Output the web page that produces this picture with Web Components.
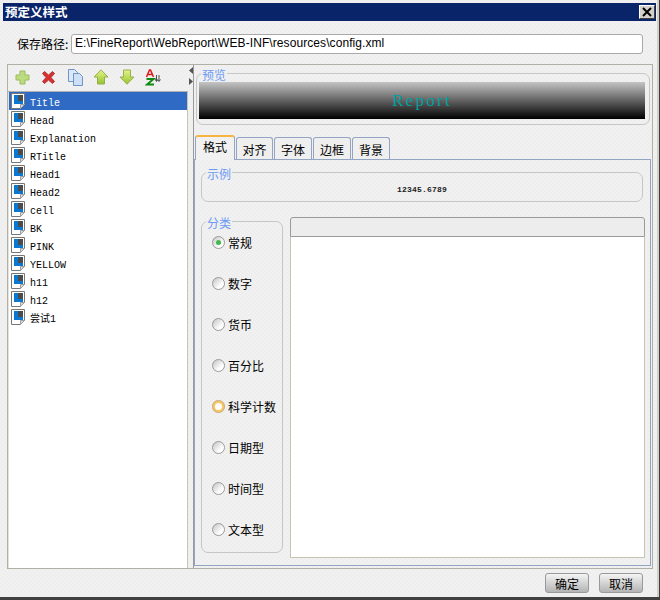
<!DOCTYPE html>
<html lang="zh">
<head>
<meta charset="utf-8">
<title>预定义样式</title>
<style>
  html, body { margin: 0; padding: 0; background: #f0f0f0; }
  body { font-family: "Noto Sans CJK SC", "Liberation Sans", sans-serif; font-size: 12px; color: #000; }
</style>
</head>
<body>
<style-dialog heading="预定义样式">
  <path-row slot="path" label="保存路径:" value="E:\FineReport\WebReport\WEB-INF\resources\config.xml"></path-row>
  <style-list slot="left"></style-list>
  <group-box slot="preview" label="预览" class="preview"><preview-strip text="Report"></preview-strip></group-box>
  <format-tabs slot="tabs"></format-tabs>
</style-dialog>

<script>
'use strict';

(function() {
  const PAPER = 'repeating-conic-gradient(#eeeeee 0 25%, #f1f1f1 0 50%) 0 0 / 4px 4px';

  // bar with the title and the close box, body comes from slots
  class StyleDialog extends HTMLElement {
    constructor() {
      super();
      const shadow = this.attachShadow({ mode: 'open' });
      shadow.innerHTML = `
        <style>
          :host { display: flex; flex-direction: column; box-sizing: border-box; width: 660px; height: 600px;
            background: ${PAPER}; border-right: 1px solid #404040; border-bottom: 3px solid #404040;
            box-shadow: inset -2px 0 0 #d4d0c8; }
          .title { display: flex; align-items: center; justify-content: space-between; height: 18px;
            margin: 3px 3px 0 3px; padding: 0 1px 0 2px; background: #0a246a; color: #fff;
            font-weight: 700; font-size: 12.500px; line-height: 18px; }
          .close { box-sizing: border-box; width: 16px; height: 14px; background: #d4d0c8; display: flex;
            align-items: center; justify-content: center;
            border: 1px solid; border-color: #fff #404040 #404040 #fff; }
          .main { display: flex; box-sizing: border-box; height: 505px; margin: 0 6px 0 7px;
            border: 1px solid #b0b0a4; }
          .left { width: 180px; flex: none; }
          .split { width: 5px; flex: none; display: flex; flex-direction: column; align-items: center;
            gap: 4px; padding-top: 2px; box-sizing: border-box; }
          .right { flex: 1; min-width: 0; display: flex; flex-direction: column; border-left: 1px solid #9a9a9a; }
          .foot { flex: 1; display: flex; justify-content: flex-end; align-items: flex-start; gap: 10px;
            padding: 4px 16px 0 0; }
        </style>
        <div class="title"><span></span>
          <span class="close"><svg width="10" height="10" viewBox="0 0 10 10"><path d="M1 1l8 8M9 1l-8 8" stroke="#000" stroke-width="2"/></svg></span>
        </div>
        <slot name="path"></slot>
        <div class="main">
          <div class="left"><slot name="left"></slot></div>
          <div class="split">
            <svg width="4" height="7" viewBox="0 0 4 7"><path d="M4 0v7L0 3.500z" fill="#555"/></svg>
            <svg width="4" height="7" viewBox="0 0 4 7"><path d="M0 0v7l4-3.500z" fill="#555"/></svg>
          </div>
          <div class="right"><slot name="preview"></slot><slot name="tabs"></slot></div>
        </div>
        <div class="foot"><dialog-button>确定</dialog-button><dialog-button>取消</dialog-button></div>
      `;
      shadow.querySelector('.title span').textContent = this.getAttribute('heading');
    }
  }

  class PathRow extends HTMLElement {
    constructor() {
      super();
      const shadow = this.attachShadow({ mode: 'open' });
      shadow.innerHTML = `
        <style>
          :host { display: flex; align-items: flex-start; box-sizing: border-box; height: 43px; padding: 13px 16px 0 17px; gap: 1px; }
          .field { flex: 1; box-sizing: border-box; height: 20px; background: #fff;
            border: 1px solid #a9a9a9; border-radius: 3px; padding-left: 3px; letter-spacing: .08px;
            font: 12px/17px "Liberation Sans", sans-serif; white-space: nowrap; overflow: hidden; }
          label { width: 53px; flex: none; white-space: nowrap; line-height: 20px; }
        </style>
        <label></label><div class="field"></div>
      `;
      shadow.querySelector('label').textContent = this.getAttribute('label');
      shadow.querySelector('.field').textContent = this.getAttribute('value');
    }
  }

  const DOC_ICON = `<svg width="17" height="18" viewBox="0 0 17 18">
    <path d="M1.500 1.500h13v11l-4 4h-9z" fill="#fff" stroke="#777"/>
    <path d="M10.500 16.500v-4h4z" fill="#d8d8d8" stroke="#a0a0a0"/>
    <rect x="4" y="3" width="9" height="9" fill="#0a78d0"/>
    <rect x="8" y="3" width="5" height="6" fill="#4c4c4c"/>
  </svg>`;

  const TOOL_ICONS = [
    // add
    `<svg width="15" height="15" viewBox="0 0 15 15"><path d="M5 1h5v4h4v5h-4v4H5v-4H1V5h4z" fill="#bcdc80" stroke="#9dbb5e"/></svg>`,
    // delete
    `<svg width="15" height="15" viewBox="0 0 15 15"><path d="M3.500 1.500l4 3.500 4-3.500 2 2-3.500 4 3.500 4-2 2-4-3.500-4 3.500-2-2 3.500-4-3.500-4z" fill="#dd2e2e" stroke="#a83c3c"/></svg>`,
    // copy
    `<svg width="17" height="17" viewBox="0 0 17 17"><path d="M1.500.5h6l3 3v9h-9z" fill="#dce8f8" stroke="#6f94c8"/><path d="M6.500 4.500h6l3 3v9h-9z" fill="#cfe0f6" stroke="#6f94c8"/></svg>`,
    // up
    `<svg width="16" height="16" viewBox="0 0 16 16"><defs><linearGradient id="u" x1="0" y1="0" x2="0" y2="1"><stop offset="0" stop-color="#e6f48a"/><stop offset="1" stop-color="#94c430"/></linearGradient></defs><path d="M8 .8l7 7.200h-3.500v7h-7V8H1z" fill="url(#u)" stroke="#98ae4a"/></svg>`,
    // down
    `<svg width="16" height="16" viewBox="0 0 16 16"><defs><linearGradient id="d" x1="0" y1="0" x2="0" y2="1"><stop offset="0" stop-color="#e6f48a"/><stop offset="1" stop-color="#94c430"/></linearGradient></defs><path d="M8 15.200L1 8h3.500V1h7v7H15z" fill="url(#d)" stroke="#98ae4a"/></svg>`,
    // sort a-z
    `<svg width="16" height="17" viewBox="0 0 16 17"><path d="M1.500 8L4.500 1h1l3 7M3 5.500h4" fill="none" stroke="#e01818" stroke-width="1.500"/><path d="M1.500 10h7L2 15.500h7" fill="none" stroke="#108a10" stroke-width="2"/><path d="M11.500 6v6M14 6v6M10 10l1.500 2.500L13 10.500M12.500 10.500l1.500 2 1.500-2" fill="none" stroke="#505050"/></svg>`
  ];

  // toolbar and the list of style names
  class StyleList extends HTMLElement {
    constructor() {
      super();
      const shadow = this.attachShadow({ mode: 'open' });
      const names = ['Title', 'Head', 'Explanation', 'RTitle', 'Head1', 'Head2', 'cell', 'BK', 'PINK', 'YELLOW', 'h11', 'h12', '尝试1'];
      const rows = names.map((name, i) => `<div class="row${i === 0 ? ' on' : ''}">${DOC_ICON}<span>${name}</span></div>`).join('');
      const tools = TOOL_ICONS.map(svg => `<span class="tool">${svg}</span>`).join('');
      shadow.innerHTML = `
        <style>
          :host { display: flex; flex-direction: column; height: 503px; }
          .bar { display: flex; align-items: center; box-sizing: border-box; height: 27px; padding: 0 0 2px 7px;
            border-bottom: 1px solid #b0b0b0; }
          .tool { width: 26px; display: flex; justify-content: flex-start; }
          .list { flex: 1; background: #fff; border-left: 1px solid #e4e2da; border-right: 1px solid #c8c4b4; }
          .row { display: flex; align-items: center; gap: 3px; height: 18px; padding-left: 1px;
            font: 10px/18px "Liberation Mono", "Noto Sans CJK SC", monospace; }
          .row span { padding-top: 6px; }
          .row.on { background: #2f6bc4; color: #fff; }
          .row svg { flex: none; }
        </style>
        <div class="bar">${tools}</div>
        <div class="list">${rows}</div>
      `;
    }
  }

  // rounded frame with a blue caption in the border
  class GroupBox extends HTMLElement {
    constructor() {
      super();
      const shadow = this.attachShadow({ mode: 'open' });
      shadow.innerHTML = `
        <style>
          :host { display: block; box-sizing: border-box; }
          fieldset { box-sizing: border-box; height: 100%; margin: 0; padding: var(--box-pad, 2px);
            border: 1px solid #c6c6c6; border-radius: 7px; min-width: 0; }
          legend { box-sizing: border-box; height: 14px; padding: 4px 1px 0; margin-left: var(--legend-left, 2px);
            color: #6c9bf4; font-size: 12px; line-height: 10px; }
        </style>
        <fieldset><legend></legend><slot></slot></fieldset>
      `;
      shadow.querySelector('legend').textContent = this.getAttribute('label');
      if (this.classList.contains('preview')) {
        this.style.cssText = 'height:59px;margin:1px 2px 0 2px;--box-pad:2px 4px 4px 2px';
      }
    }
  }

  class PreviewStrip extends HTMLElement {
    constructor() {
      super();
      const shadow = this.attachShadow({ mode: 'open' });
      shadow.innerHTML = `
        <style>
          :host { display: flex; align-items: center; justify-content: center; height: 37px;
            background: linear-gradient(#c4c4c4, #000); color: #00a0a0;
            font: 17px/40px "Liberation Serif", serif; letter-spacing: 2.300px; }
        </style>
        <span></span>
      `;
      shadow.querySelector('span').textContent = this.getAttribute('text');
    }
  }

  class RadioItem extends HTMLElement {
    constructor() {
      super();
      const shadow = this.attachShadow({ mode: 'open' });
      shadow.innerHTML = `
        <style>
          :host { display: flex; align-items: center; gap: 3px; height: 20px; white-space: nowrap; }
          .dot { box-sizing: border-box; width: 13px; height: 13px; border-radius: 50%; flex: none;
            border: 1px solid #9a9a9a; background: linear-gradient(135deg, #c4c4c4, #fff 70%);
            display: flex; align-items: center; justify-content: center; }
          :host([hot]) .dot { border: 3px solid #fbc560; background: #fff; outline: 1px solid #c0b090; outline-offset: -1px; }
          :host([checked]) .dot::after { content: ""; width: 5px; height: 5px; border-radius: 50%; background: #3fb84e; }
        </style>
        <span class="dot"></span><slot></slot>
      `;
    }
  }

  class TabStrip extends HTMLElement {
    constructor() {
      super();
      const shadow = this.attachShadow({ mode: 'open' });
      const tabs = [['格式', 40], ['对齐', 37], ['字体', 38], ['边框', 38], ['背景', 38]];
      shadow.innerHTML = `
        <style>
          :host { display: flex; align-items: flex-end; gap: 1px; height: 24px; padding-left: 1px; }
          .tab { box-sizing: border-box; height: 22px; text-align: center; line-height: 24px; background: #efefef;
            border: 1px solid #93a5c2; border-bottom: none; border-radius: 3px 3px 0 0; }
          .tab.on { height: 25px; margin-bottom: -1px; background: #f1f1f1; border-top: 2px solid #f6b440;
            position: relative; line-height: 19px; }
        </style>
        ${tabs.map((t, i) => `<div class="tab${i === 0 ? ' on' : ''}" style="width:${t[1]}px">${t[0]}</div>`).join('')}
      `;
    }
  }

  // tab strip and the number format page
  class FormatTabs extends HTMLElement {
    constructor() {
      super();
      const shadow = this.attachShadow({ mode: 'open' });
      const kinds = ['常规', '数字', '货币', '百分比', '科学计数', '日期型', '时间型', '文本型'];
      shadow.innerHTML = `
        <style>
          :host { display: block; margin-top: 10px; }
          .page { box-sizing: border-box; height: 407px; margin-right: 1px; padding: 5px 5px 0 6px;
            border: 1px solid #93a5c2; }
          .sample { height: 37px; margin-right: 2px; }
          .num { text-align: center; font: 700 8px/14px "Liberation Mono", monospace; letter-spacing: .2px; margin-top: 2px; color: #222; }
          .row { display: flex; gap: 7px; margin-top: 12px; }
          .kinds { width: 82px; height: 339px; flex: none; --box-pad: 4px 4px 0 10px; --legend-left: -6px; }
          .stack { display: flex; flex-direction: column; gap: 21px; }
          .side { flex: 1; margin-top: 3px; height: 341px; display: flex; flex-direction: column; }
          .head { box-sizing: border-box; height: 20px; background: #ededed; border: 1px solid #9a9a9a; border-radius: 3px 3px 0 0; }
          .box { flex: 1; background: #fff; border: 1px solid #c8c4b4; border-top: none; }
        </style>
        <tab-strip></tab-strip>
        <div class="page">
          <group-box class="sample" label="示例"><div class="num">12345.6789</div></group-box>
          <div class="row">
            <group-box class="kinds" label="分类">
              <div class="stack">${kinds.map((k, i) => `<radio-item${i === 0 ? ' checked' : ''}${i === 4 ? ' hot' : ''}>${k}</radio-item>`).join('')}</div>
            </group-box>
            <div class="side"><div class="head"></div><div class="box"></div></div>
          </div>
        </div>
      `;
    }
  }

  class DialogButton extends HTMLElement {
    constructor() {
      super();
      const shadow = this.attachShadow({ mode: 'open' });
      shadow.innerHTML = `
        <style>
          :host { display: flex; align-items: center; justify-content: center; box-sizing: border-box;
            width: 44px; height: 20px; border: 1px solid #9a9a9a; border-radius: 3px;
            background: linear-gradient(#f4f4f4, #b4b4b4); }
        </style>
        <slot></slot>
      `;
    }
  }

  customElements.define('dialog-button', DialogButton);
  customElements.define('radio-item', RadioItem);
  customElements.define('group-box', GroupBox);
  customElements.define('preview-strip', PreviewStrip);
  customElements.define('tab-strip', TabStrip);
  customElements.define('format-tabs', FormatTabs);
  customElements.define('style-list', StyleList);
  customElements.define('path-row', PathRow);
  customElements.define('style-dialog', StyleDialog);
})();
</script>
</body>
</html>
